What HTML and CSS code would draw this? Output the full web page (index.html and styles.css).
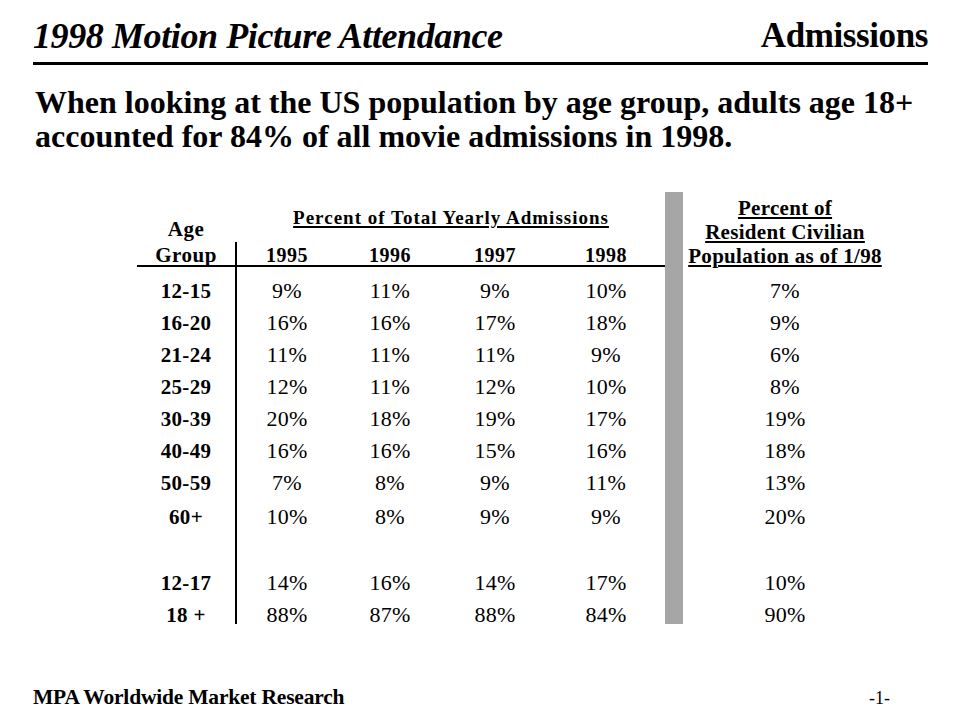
FILE: index.html
```html
<!DOCTYPE html>
<html>
<head>
<meta charset="utf-8">
<link rel="stylesheet" href="styles.css">
</head>
<body>
<div class="slide">
  <header class="top">
    <h1 class="title">1998 Motion Picture Attendance</h1>
    <div class="section">Admissions</div>
  </header>
  <p class="lead">When looking at the US population by age group, adults age 18+<br>accounted for 84% of all movie admissions in 1998.</p>

  <div class="table">
    <div class="agehead">Age<br>Group</div>
    <div class="pcthead"><span>Percent of Total Yearly Admissions</span></div>
    <div class="yr c3">1995</div>
    <div class="yr c4">1996</div>
    <div class="yr c5">1997</div>
    <div class="yr c6">1998</div>
    <div class="hline"></div>
    <div class="vline"></div>
    <div class="graybar"></div>
    <div class="pophead"><span>Percent of<br>Resident Civilian<br>Population as of 1/98</span></div>

    <div class="age">12-15</div><div class="v c3">9%</div><div class="v c4">11%</div><div class="v c5">9%</div><div class="v c6">10%</div><div class="v c8">7%</div>
    <div class="age">16-20</div><div class="v c3">16%</div><div class="v c4">16%</div><div class="v c5">17%</div><div class="v c6">18%</div><div class="v c8">9%</div>
    <div class="age">21-24</div><div class="v c3">11%</div><div class="v c4">11%</div><div class="v c5">11%</div><div class="v c6">9%</div><div class="v c8">6%</div>
    <div class="age">25-29</div><div class="v c3">12%</div><div class="v c4">11%</div><div class="v c5">12%</div><div class="v c6">10%</div><div class="v c8">8%</div>
    <div class="age">30-39</div><div class="v c3">20%</div><div class="v c4">18%</div><div class="v c5">19%</div><div class="v c6">17%</div><div class="v c8">19%</div>
    <div class="age">40-49</div><div class="v c3">16%</div><div class="v c4">16%</div><div class="v c5">15%</div><div class="v c6">16%</div><div class="v c8">18%</div>
    <div class="age">50-59</div><div class="v c3">7%</div><div class="v c4">8%</div><div class="v c5">9%</div><div class="v c6">11%</div><div class="v c8">13%</div>
    <div class="age">60+</div><div class="v c3">10%</div><div class="v c4">8%</div><div class="v c5">9%</div><div class="v c6">9%</div><div class="v c8">20%</div>
    <div class="spacer"></div>
    <div class="age">12-17</div><div class="v c3">14%</div><div class="v c4">16%</div><div class="v c5">14%</div><div class="v c6">17%</div><div class="v c8">10%</div>
    <div class="age last">18 +</div><div class="v c3 last">88%</div><div class="v c4 last">87%</div><div class="v c5 last">88%</div><div class="v c6 last">84%</div><div class="v c8 last">90%</div>
  </div>

  <footer class="foot">
    <div class="org">MPA Worldwide Market Research</div>
    <div class="page">-1-</div>
  </footer>
</div>
</body>
</html>
```
FILE: styles.css
```css
html, body {
  margin: 0;
  padding: 0;
  background: #fff;
}
body {
  font-family: "Liberation Serif", "Times New Roman", serif;
  color: #000;
}
.slide {
  width: 960px;
  height: 720px;
  display: flex;
  flex-direction: column;
  box-sizing: border-box;
}
.top {
  margin: 14px 32px 0 33px;
  display: flex;
  justify-content: space-between;
  align-items: flex-end;
  border-bottom: 3px solid #000;
  height: 42px;
  padding-bottom: 6px;
}
.title {
  margin: 0;
  font-size: 36px;
  font-weight: bold;
  font-style: italic;
  line-height: 40px;
  letter-spacing: -0.4px;
}
.section {
  font-size: 35px;
  font-weight: bold;
  line-height: 40px;
  letter-spacing: -0.4px;
}
.lead {
  margin: 20px 20px 0 35px;
  font-size: 32px;
  font-weight: bold;
  line-height: 34px;
  white-space: nowrap;
}
.table {
  margin: 39px 0 0 137px;
  display: grid;
  grid-template-columns: 98px 2px 100px 106px 104px 118px 18px 204px;
  grid-template-rows: 50px 23px 2px 40px repeat(6, 32px) 34px 34px 32px 25px;
  height: 432px;
}
.agehead {
  grid-column: 1;
  grid-row: 1 / 4;
  align-self: end;
  margin-bottom: -1px;
  text-align: center;
  font-weight: bold;
  font-size: 21px;
  line-height: 26px;
  letter-spacing: 0.5px;
}
.pcthead {
  grid-column: 3 / 7;
  grid-row: 1;
  align-self: end;
  text-align: center;
  font-weight: bold;
  font-size: 19px;
  line-height: 20px;
  margin-bottom: 14px;
  letter-spacing: 1px;
}
.pcthead span, .pophead span {
  text-decoration: underline;
  text-decoration-thickness: 2px;
  text-underline-offset: 2px;
}
.yr {
  grid-row: 2;
  align-self: end;
  margin-bottom: -2px;
  text-align: center;
  font-weight: bold;
  font-size: 20px;
  line-height: 24px;
  letter-spacing: 0.5px;
}
.hline {
  grid-column: 1 / 7;
  grid-row: 3;
  background: #000;
}
.vline {
  grid-column: 2;
  grid-row: 2 / -1;
  background: #000;
}
.graybar {
  grid-column: 7;
  grid-row: 1 / -1;
  background: #a6a6a6;
}
.pophead {
  grid-column: 8;
  grid-row: 1 / 4;
  align-self: end;
  margin-bottom: -1px;
  text-align: center;
  font-weight: bold;
  font-size: 21px;
  line-height: 24px;
  letter-spacing: 0.3px;
}
.c3 { grid-column: 3; }
.c4 { grid-column: 4; }
.c5 { grid-column: 5; }
.c6 { grid-column: 6; }
.c8 { grid-column: 8; }
.age {
  grid-column: 1;
  align-self: end;
  text-align: center;
  font-weight: bold;
  font-size: 21px;
  line-height: 32px;
  letter-spacing: 0.3px;
}
.v {
  align-self: end;
  text-align: center;
  font-size: 22px;
  line-height: 32px;
  letter-spacing: 0.3px;
}
.last {
  align-self: start;
}
.spacer {
  grid-column: 1;
}
.foot {
  margin: auto 70px 10px 33px;
  display: flex;
  justify-content: space-between;
  align-items: baseline;
}
.org {
  font-size: 21.5px;
  font-weight: bold;
  letter-spacing: -0.2px;
}
.page {
  font-size: 18px;
}
```
